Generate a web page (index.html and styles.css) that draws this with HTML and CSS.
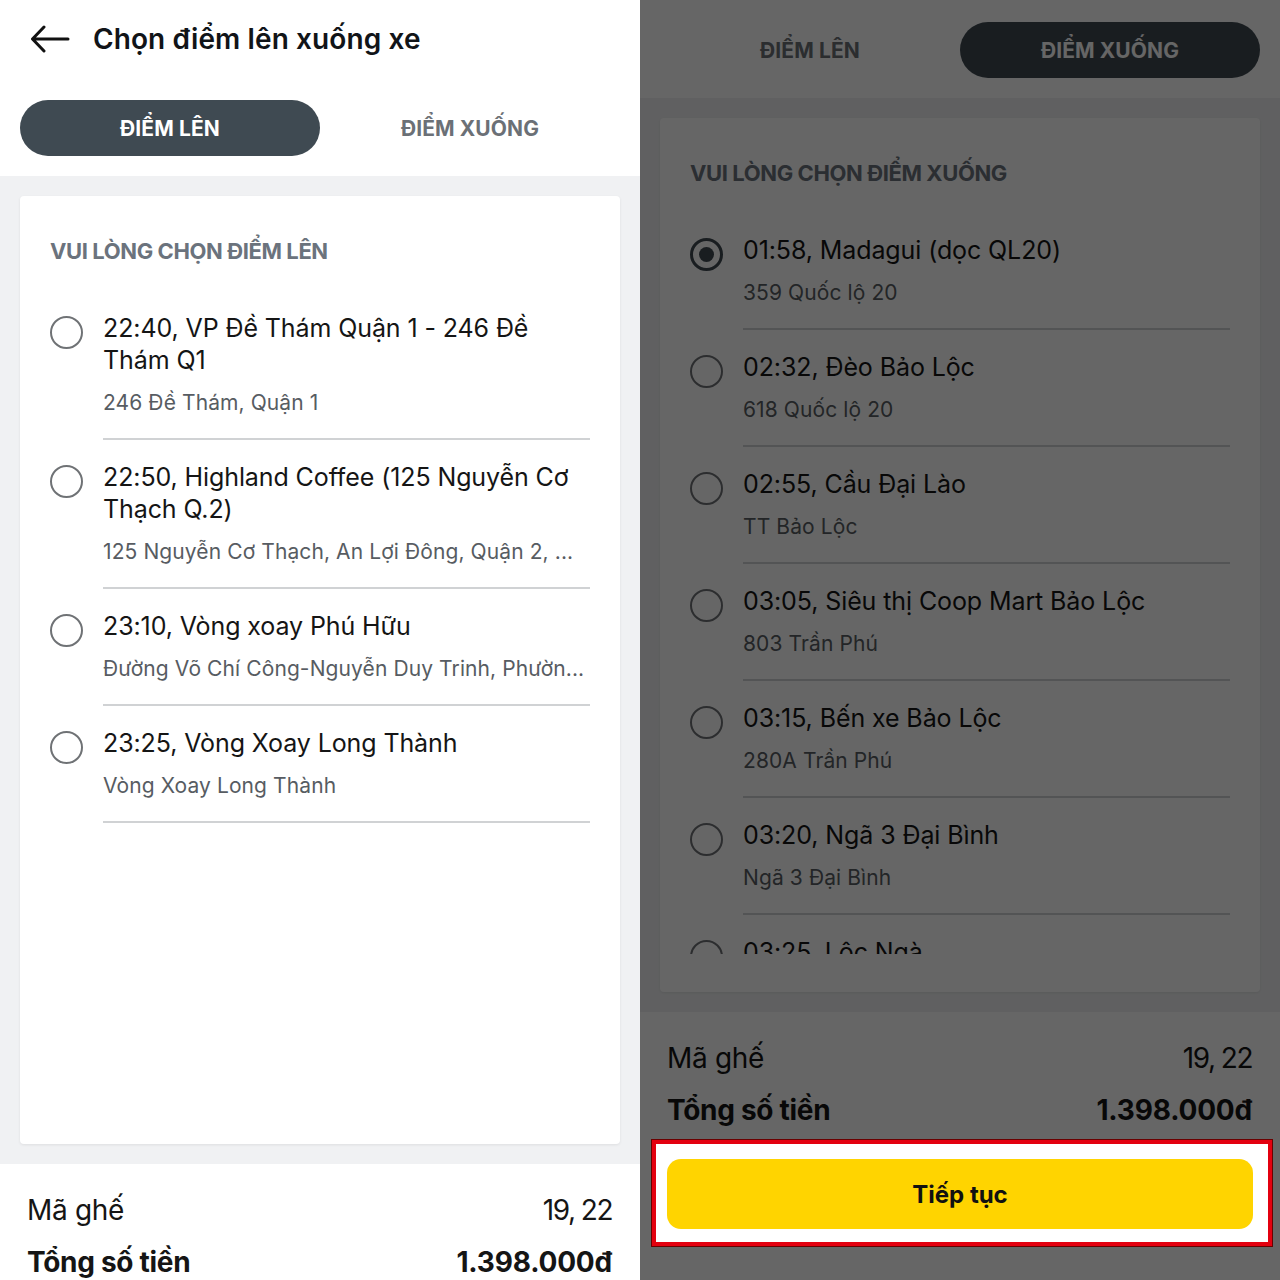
FILE: index.html
```html
<!DOCTYPE html>
<html lang="vi">
<head>
<meta charset="utf-8">
<title>Chọn điểm lên xuống xe</title>
<link rel="stylesheet" href="styles.css">
</head>
<body>
<div class="stage">
  <section class="screen screen--pickup">
    <div class="page">
      <header class="appbar">
        <svg class="back" viewBox="0 0 40 28" width="40" height="28" aria-hidden="true">
          <path d="M38 14H3M14 2L2.5 14L14 26" fill="none" stroke="#111" stroke-width="3" stroke-linecap="round" stroke-linejoin="round"/>
        </svg>
        <h1 class="appbar-title">Chọn điểm lên xuống xe</h1>
      </header>
      <nav class="tabs">
        <div class="tab tab--active">ĐIỂM LÊN</div>
        <div class="tab">ĐIỂM XUỐNG</div>
      </nav>
      <main class="content">
        <div class="card">
          <h2 class="card-title">VUI LÒNG CHỌN ĐIỂM LÊN</h2>
          <ul class="stops">
            <li class="stop"><span class="radio"></span><div class="stop-body"><div class="stop-name">22:40, VP Đề Thám Quận 1 - 246 Đề Thám Q1</div><div class="stop-addr">246 Đề Thám, Quận 1</div></div></li>
            <li class="stop"><span class="radio"></span><div class="stop-body"><div class="stop-name">22:50, Highland Coffee (125 Nguyễn Cơ Thạch Q.2)</div><div class="stop-addr">125 Nguyễn Cơ Thạch, An Lợi Đông, Quận 2, ...</div></div></li>
            <li class="stop"><span class="radio"></span><div class="stop-body"><div class="stop-name">23:10, Vòng xoay Phú Hữu</div><div class="stop-addr">Đường Võ Chí Công-Nguyễn Duy Trinh, Phườn...</div></div></li>
            <li class="stop"><span class="radio"></span><div class="stop-body"><div class="stop-name">23:25, Vòng Xoay Long Thành</div><div class="stop-addr">Vòng Xoay Long Thành</div></div></li>
          </ul>
        </div>
      </main>
      <footer class="summary">
        <div class="row"><span>Mã ghế</span><span>19, 22</span></div>
        <div class="row row--total"><span>Tổng số tiền</span><span>1.398.000đ</span></div>
        <div class="cta-wrap"><button class="cta" type="button">Tiếp tục</button></div>
      </footer>
    </div>
  </section>

  <section class="screen screen--dropoff">
    <div class="page">
      <nav class="tabs">
        <div class="tab">ĐIỂM LÊN</div>
        <div class="tab tab--active">ĐIỂM XUỐNG</div>
      </nav>
      <main class="content">
        <div class="card">
          <h2 class="card-title">VUI LÒNG CHỌN ĐIỂM XUỐNG</h2>
          <ul class="stops">
            <li class="stop"><span class="radio radio--checked"></span><div class="stop-body"><div class="stop-name">01:58, Madagui (dọc QL20)</div><div class="stop-addr">359 Quốc lộ 20</div></div></li>
            <li class="stop"><span class="radio"></span><div class="stop-body"><div class="stop-name">02:32, Đèo Bảo Lộc</div><div class="stop-addr">618 Quốc lộ 20</div></div></li>
            <li class="stop"><span class="radio"></span><div class="stop-body"><div class="stop-name">02:55, Cầu Đại Lào</div><div class="stop-addr">TT Bảo Lộc</div></div></li>
            <li class="stop"><span class="radio"></span><div class="stop-body"><div class="stop-name">03:05, Siêu thị Coop Mart Bảo Lộc</div><div class="stop-addr">803 Trần Phú</div></div></li>
            <li class="stop"><span class="radio"></span><div class="stop-body"><div class="stop-name">03:15, Bến xe Bảo Lộc</div><div class="stop-addr">280A Trần Phú</div></div></li>
            <li class="stop"><span class="radio"></span><div class="stop-body"><div class="stop-name">03:20, Ngã 3 Đại Bình</div><div class="stop-addr">Ngã 3 Đại Bình</div></div></li>
            <li class="stop"><span class="radio"></span><div class="stop-body"><div class="stop-name">03:25, Lộc Ngà</div><div class="stop-addr">Lộc Ngà</div></div></li>
          </ul>
        </div>
      </main>
      <footer class="summary">
        <div class="row"><span>Mã ghế</span><span>19, 22</span></div>
        <div class="row row--total"><span>Tổng số tiền</span><span>1.398.000đ</span></div>
        <div class="cta-wrap cta-wrap--highlight"><button class="cta" type="button">Tiếp tục</button></div>
      </footer>
    </div>
  </section>
</div>
</body>
</html>
```

FILE: styles.css
```css
* { box-sizing: border-box; }

html, body {
  margin: 0;
  padding: 0;
  background: #ffffff;
}

body {
  font-family: "Inter", "Noto Sans", "Liberation Sans", sans-serif;
  color: #151515;
}

.stage {
  display: flex;
  width: 1280px;
  height: 1280px;
}

.screen {
  width: 640px;
  height: 1280px;
  overflow: hidden;
  background: #ffffff;
}

.page {
  display: flex;
  flex-direction: column;
  height: 1280px;
}

.screen--pickup .page {
  height: 1432px;
}

/* App bar */
.appbar {
  display: flex;
  align-items: center;
  gap: 23px;
  height: 78px;
  padding: 0 30px;
  flex: none;
}

.back {
  flex: none;
  display: block;
}

.appbar-title {
  margin: 0;
  font-size: 28px;
  font-weight: 600;
  letter-spacing: 0.1px;
  color: #111418;
}

/* Tabs */
.tabs {
  display: flex;
  padding: 22px 20px 20px;
  flex: none;
  background: #ffffff;
}

.tab {
  flex: 1;
  height: 56px;
  border-radius: 28px;
  display: flex;
  align-items: center;
  justify-content: center;
  font-size: 21px;
  font-weight: 700;
  letter-spacing: 0.1px;
  color: #6b7076;
}

.tab--active {
  background: #3f4a52;
  color: #ffffff;
}

/* Content */
.content {
  flex: 1;
  min-height: 0;
  display: flex;
  padding: 20px;
  background: #f0f1f3;
}

.card {
  flex: 1;
  display: flex;
  flex-direction: column;
  min-height: 0;
  background: #ffffff;
  border-radius: 4px;
  box-shadow: 0 1px 3px rgba(0, 0, 0, 0.08);
  padding: 40px 30px 38px 30px;
}

.card-title {
  margin: 0;
  font-size: 22px;
  line-height: 30px;
  font-weight: 700;
  letter-spacing: -0.4px;
  color: #6b737d;
}

.stops {
  list-style: none;
  margin: 25px 0 0;
  padding: 0;
  flex: 1;
  min-height: 0;
  overflow: hidden;
}

.stop {
  display: flex;
  gap: 20px;
}

.radio {
  flex: none;
  width: 33px;
  height: 33px;
  margin-top: 25px;
  border: 2.5px solid #6f7275;
  border-radius: 50%;
  display: flex;
  align-items: center;
  justify-content: center;
}

.radio--checked {
  border: 3px solid #3f4a52;
}

.radio--checked::after {
  content: "";
  width: 15px;
  height: 15px;
  border-radius: 50%;
  background: #3f4a52;
}

.stop-body {
  flex: 1;
  min-width: 0;
  padding: 21px 0 20px;
  border-bottom: 2px solid #d0d2d4;
}

.stop-name {
  font-size: 25px;
  line-height: 32px;
  letter-spacing: -0.1px;
  color: #151515;
}

.stop-addr {
  margin-top: 12px;
  font-size: 21px;
  line-height: 30px;
  letter-spacing: 0.1px;
  color: #575c62;
  white-space: nowrap;
  overflow: hidden;
}

/* Summary footer */
.summary {
  flex: none;
  background: #ffffff;
  padding: 26px 28px 0 27px;
  height: 268px;
}

.row {
  display: flex;
  justify-content: space-between;
  align-items: center;
  font-size: 28px;
  line-height: 40px;
  letter-spacing: -0.3px;
  color: #151515;
}

.row span:last-child {
  letter-spacing: -1.5px;
}

.row + .row {
  margin-top: 12px;
}

.row--total {
  font-weight: 700;
}

.row--total span:last-child {
  letter-spacing: -0.2px;
}

.cta-wrap {
  margin: 10px -20px 0 -15px;
  padding: 19px 19px 17px 15px;
  background: #ffffff;
}

.cta-wrap--highlight {
  position: relative;
  z-index: 1;
  padding: 15px 15px 13px 11px;
  border: 4px solid #e3000f;
  box-shadow: 0 0 0 1px #6a0000, 0 0 0 1600px rgba(0, 0, 0, 0.6);
}

.cta {
  display: flex;
  align-items: center;
  justify-content: center;
  width: 100%;
  height: 70px;
  border: none;
  border-radius: 14px;
  background: #ffd400;
  font-family: inherit;
  font-size: 24px;
  font-weight: 700;
  letter-spacing: 0;
  color: #111111;
}
```
